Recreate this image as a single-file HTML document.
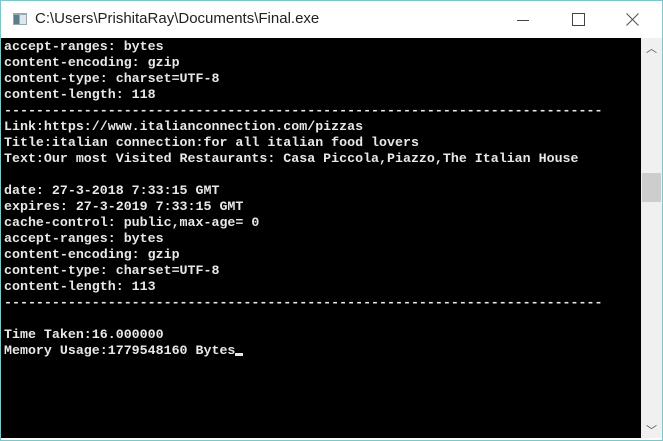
<!DOCTYPE html>
<html><head><meta charset="utf-8"><style>
html,body{margin:0;padding:0;width:663px;height:441px;overflow:hidden;background:#fff}
.win{position:absolute;left:0;top:0;width:661px;height:439px;border:1px solid #7fc6c9;background:#fff}
.title{position:absolute;left:0;top:0;width:661px;height:37px;background:#fff}
.icon{position:absolute;left:12px;top:12px;width:14px;height:12px;background:#9aa8b0}
.icon:before{content:"";position:absolute;left:1px;top:2px;width:5px;height:9px;background:#5a7e8c}
.icon:after{content:"";position:absolute;left:7px;top:2px;width:6px;height:9px;background:#dde6ea}
.tt{position:absolute;left:34px;top:9px;font:15px "Liberation Sans",sans-serif;color:#222}
.min{position:absolute;left:516px;top:19px;width:12px;height:1px;background:#444}
.max{position:absolute;left:571px;top:12px;width:11px;height:11px;border:1px solid #444}
.x{position:absolute;left:625px;top:12px}
.con{position:absolute;left:0;top:37px;width:640px;height:400px;background:#000}
pre{margin:0;position:absolute;left:3px;top:1px;font:bold 13.3px/16px "Liberation Mono",monospace;color:#e8e8e8}
.sb{position:absolute;left:640px;top:37px;width:21px;height:400px;background:#f0f0f0}
.th{position:absolute;left:1px;top:135px;width:19px;height:29px;background:#cdcdcd}
.ar{position:absolute;left:5px;font:11px "Liberation Sans",sans-serif;color:#555}
.cur{display:inline-block;width:8px;height:3px;background:#e8e8e8;vertical-align:-2px}
</style></head><body>
<div class="win">
<div class="title"><div class="icon"></div><div class="tt">C:\Users\PrishitaRay\Documents\Final.exe</div>
<div class="min"></div><div class="max"></div>
<svg class="x" width="13" height="13" viewBox="0 0 13 13"><path d="M0.5 0.5L12.5 12.5M12.5 0.5L0.5 12.5" stroke="#555" stroke-width="1.1"/></svg></div>
<div class="con"><pre>accept-ranges: bytes
content-encoding: gzip
content-type: charset=UTF-8
content-length: 118
---------------------------------------------------------------------------
Link:https://www.italianconnection.com/pizzas
Title:italian connection:for all italian food lovers
Text:Our most Visited Restaurants: Casa Piccola,Piazzo,The Italian House

date: 27-3-2018 7:33:15 GMT
expires: 27-3-2019 7:33:15 GMT
cache-control: public,max-age= 0
accept-ranges: bytes
content-encoding: gzip
content-type: charset=UTF-8
content-length: 113
---------------------------------------------------------------------------

Time Taken:16.000000
Memory Usage:1779548160 Bytes<span class="cur"></span></pre></div>
<div class="sb"><div class="ar" style="top:2px">︿</div><div class="th"></div><div class="ar" style="top:384px">﹀</div></div>
</div>
</body></html>
